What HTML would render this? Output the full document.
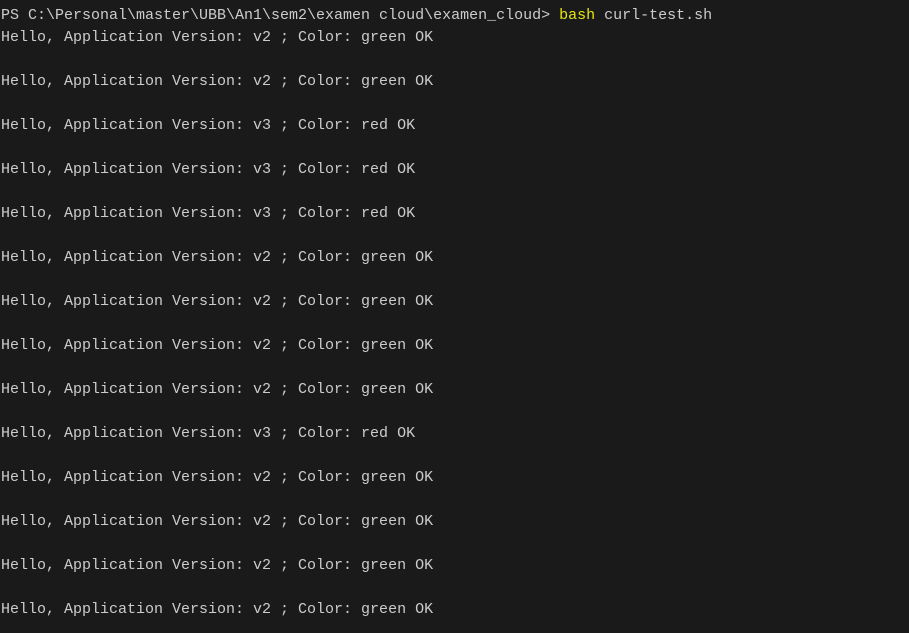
<!DOCTYPE html>
<html><head><style>
html,body{margin:0;padding:0;background:#1a1a1a;width:909px;height:633px;overflow:hidden}
pre{position:absolute;left:1px;top:-17px;margin:0;font-family:"Liberation Mono",monospace;font-size:15px;line-height:22px;color:#cccccc;}
.y{color:#e5e510}
</style></head><body>
<pre>deployment.apps/app-v3 configured   gateway.ok
PS C:\Personal\master\UBB\An1\sem2\examen cloud\examen_cloud&gt; <span class="y">bash</span> curl-test.sh
Hello, Application Version: v2 ; Color: green OK

Hello, Application Version: v2 ; Color: green OK

Hello, Application Version: v3 ; Color: red OK

Hello, Application Version: v3 ; Color: red OK

Hello, Application Version: v3 ; Color: red OK

Hello, Application Version: v2 ; Color: green OK

Hello, Application Version: v2 ; Color: green OK

Hello, Application Version: v2 ; Color: green OK

Hello, Application Version: v2 ; Color: green OK

Hello, Application Version: v3 ; Color: red OK

Hello, Application Version: v2 ; Color: green OK

Hello, Application Version: v2 ; Color: green OK

Hello, Application Version: v2 ; Color: green OK

Hello, Application Version: v2 ; Color: green OK
</pre>
</body></html>
